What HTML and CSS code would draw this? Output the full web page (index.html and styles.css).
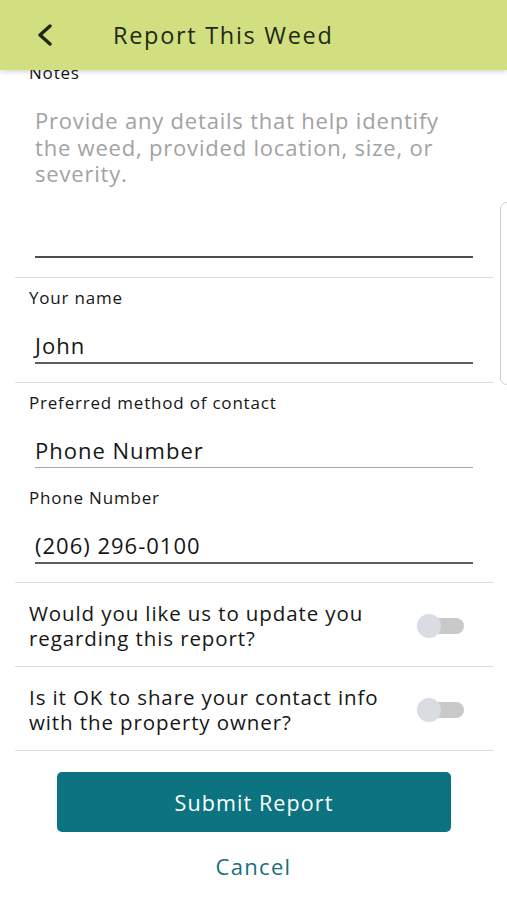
FILE: index.html
```html
<!DOCTYPE html>
<html lang="en">
<head>
    <meta charset="UTF-8">
    <meta name="viewport" content="width=device-width, initial-scale=1.0">
    <title>Report This Weed</title>
    <link rel="stylesheet" href="styles.css">
</head>
<body>
    <div class="screen">
        <div class="topBar">
            <svg class="backIcon" width="20" height="22" viewBox="0 0 20 22">
                <path d="M15 2 L5 11 L15 20" fill="none" stroke="#1e2812" stroke-width="3.4" stroke-linecap="round" stroke-linejoin="round"/>
            </svg>
            <span class="title">Report This Weed</span>
        </div>

        <div class="form">
            <div class="section notes">
                <div class="label">Notes</div>
                <div class="field textArea placeholder">Provide any details that help identify the weed, provided location, size, or severity.</div>
            </div>
            <div class="divider"></div>

            <div class="section">
                <div class="label">Your name</div>
                <div class="field">John</div>
            </div>
            <div class="divider"></div>

            <div class="section">
                <div class="label">Preferred method of contact</div>
                <div class="field light">Phone Number</div>
                <div class="label second">Phone Number</div>
                <div class="field">(206) 296-0100</div>
            </div>
            <div class="divider"></div>

            <div class="switchRow">
                <div class="question">Would you like us to update you regarding this report?</div>
                <div class="toggle"><span class="track"></span><span class="thumb"></span></div>
            </div>
            <div class="divider"></div>

            <div class="switchRow">
                <div class="question">Is it OK to share your contact info with the property owner?</div>
                <div class="toggle"><span class="track"></span><span class="thumb"></span></div>
            </div>
            <div class="divider"></div>

            <div class="actions">
                <div class="submitBtn">Submit Report</div>
                <div class="cancelBtn">Cancel</div>
            </div>
        </div>

        <div class="scrollHint"></div>
    </div>
</body>
</html>
```

FILE: styles.css
```css
*{
    padding: 0px;
    margin: 0px;
    box-sizing: border-box;
}
body{
    background-color: #fff;
    font-family: "Open Sans", "Noto Sans", sans-serif;
    color: #161616;
}
.screen{
    width: 507px;
    height: 900px;
    overflow: hidden;
    position: relative;
}
.topBar{
    height: 70px;
    background-color: #d1df80;
    display: flex;
    align-items: center;
    padding-left: 35px;
    position: relative;
    z-index: 2;
    box-shadow: 0 2px 5px rgba(0,0,0,.16);
}
.topBar .backIcon{
    margin-right: 58px;
}
.topBar .title{
    font-size: 23.5px;
    color: #1f2a14;
    letter-spacing: 1.7px;
}
.form .section{
    padding-top: 10px;
}
.form .notes{
    padding-top: 0px;
    margin-top: -7px;
}
.label{
    font-size: 17px;
    line-height: 20px;
    padding-left: 29px;
    letter-spacing: .8px;
    color: #161616;
}
.label.second{
    margin-top: 20px;
}
.field{
    margin: 24px 34px 0px 35px;
    font-size: 22px;
    line-height: 26px;
    letter-spacing: 1px;
    padding-bottom: 4px;
    border-bottom: 2px solid #5e5e5e;
    color: #161616;
}
.field.light{
    border-bottom: 1px solid #a8a8a8;
}
.field.textArea{
    margin-top: 24px;
    height: 151px;
    line-height: 26.5px;
    letter-spacing: .8px;
    border-bottom-color: #4e4e4e;
}
.placeholder{
    color: #a2a2a2;
}
.divider{
    height: 1px;
    background-color: #dedede;
    margin: 18px 14px 0px 15px;
}
.notes + .divider{
    margin-top: 19px;
}
.switchRow{
    display: flex;
    align-items: center;
    justify-content: space-between;
    padding: 18px 0px 15px 29px;
}
.switchRow + .divider{
    margin-top: 0px;
}
.question{
    font-size: 20.5px;
    line-height: 25px;
    letter-spacing: .9px;
    width: 370px;
    color: #161616;
}
.toggle{
    position: relative;
    width: 48px;
    height: 24px;
    margin-right: 42px;
}
.toggle .track{
    position: absolute;
    left: 12px;
    top: 4px;
    width: 35px;
    height: 16px;
    border-radius: 8px;
    background-color: #c9c9c9;
}
.toggle .thumb{
    position: absolute;
    left: 0px;
    top: 0px;
    width: 24px;
    height: 24px;
    border-radius: 50%;
    background-color: #d9dde3;
}
.actions{
    padding-top: 21px;
    display: flex;
    flex-direction: column;
    align-items: center;
}
.submitBtn{
    width: 394px;
    height: 60px;
    border-radius: 5px;
    background-color: #0b7480;
    color: #fff;
    font-size: 21.5px;
    letter-spacing: 1.1px;
    display: flex;
    align-items: center;
    justify-content: center;
    margin-left: 1px;
}
.cancelBtn{
    margin-top: 21px;
    font-size: 22px;
    line-height: 26px;
    letter-spacing: 1.3px;
    color: #17707a;
}
.scrollHint{
    position: absolute;
    left: 500px;
    top: 202px;
    width: 14px;
    height: 183px;
    border: 1px solid #cfcfcf;
    border-radius: 8px;
}
```
